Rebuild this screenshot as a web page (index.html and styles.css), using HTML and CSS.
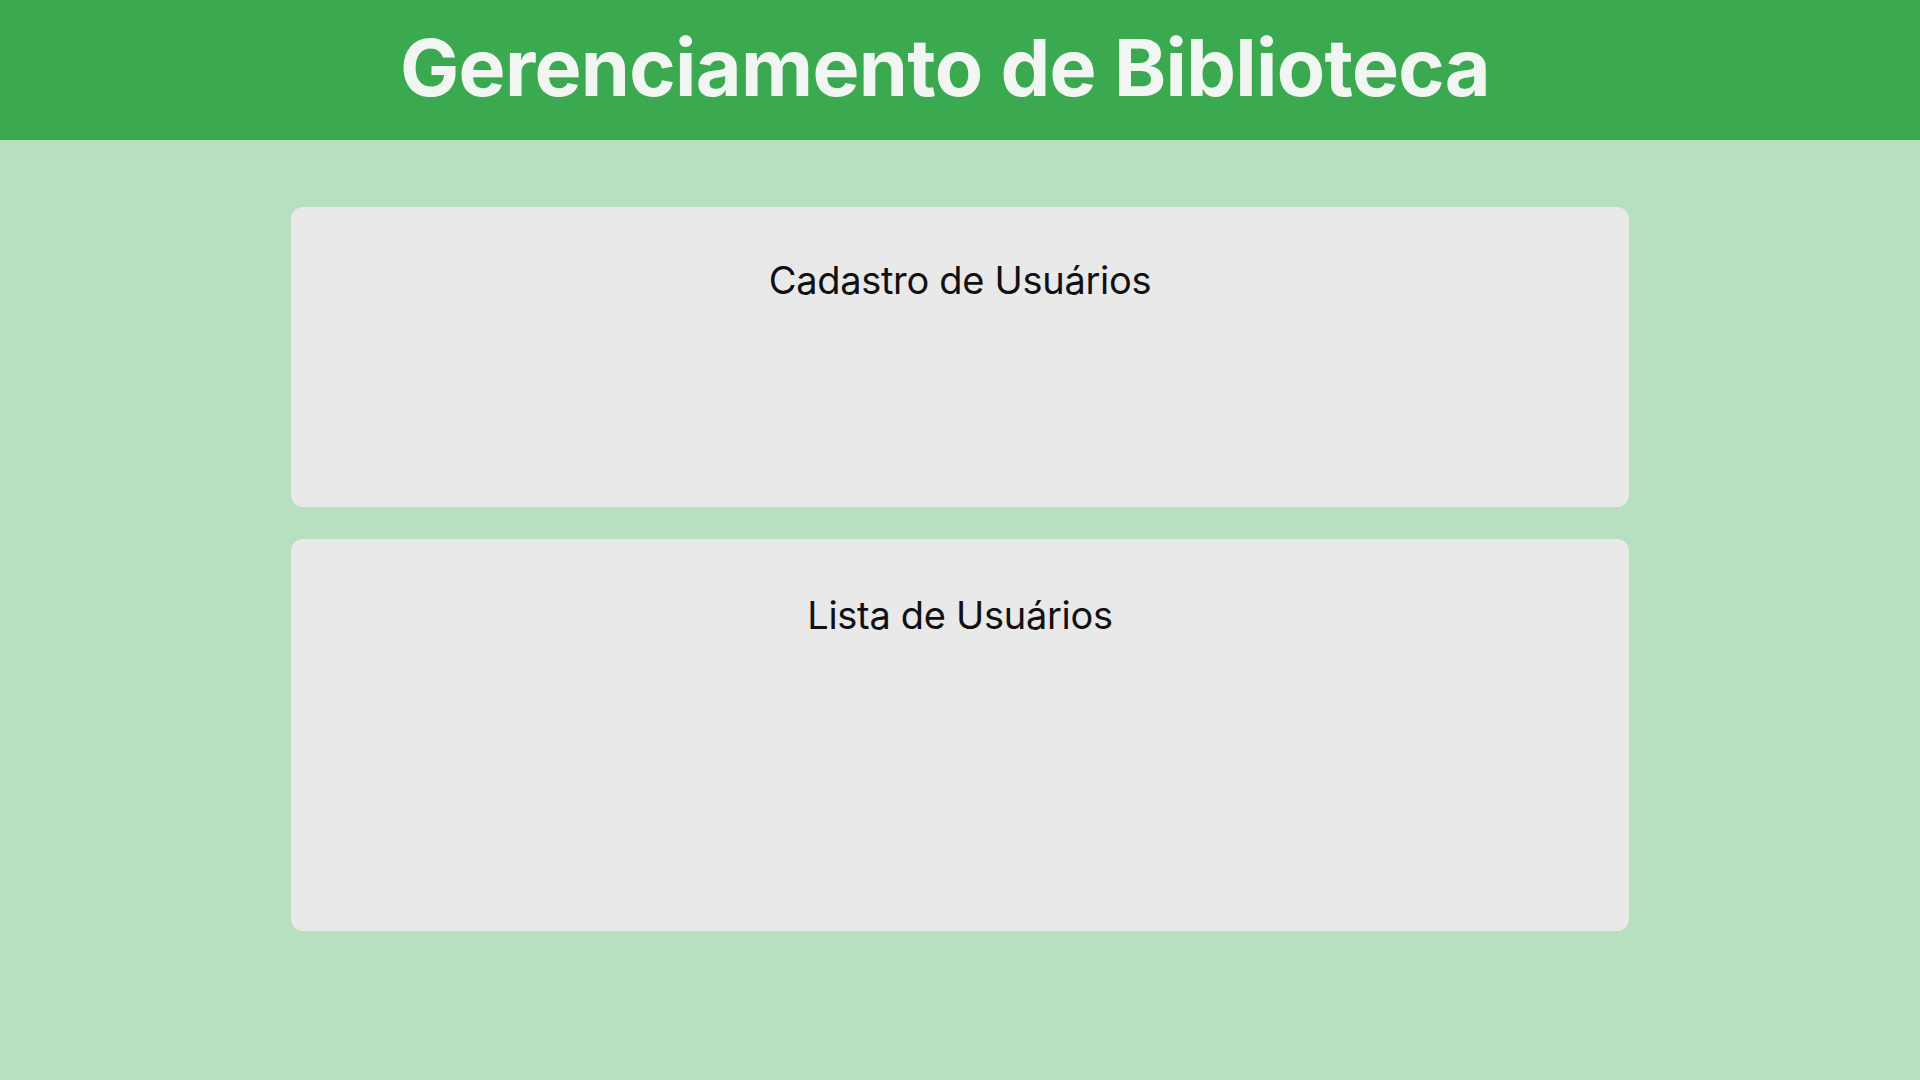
FILE: index.html
```html
<!DOCTYPE html>
<html lang="pt-BR">
<head>
<meta charset="utf-8">
<title>Gerenciamento de Biblioteca</title>
<link rel="stylesheet" href="styles.css">
</head>
<body>
<header class="topbar">
  <h1 class="topbar-title">Gerenciamento de Biblioteca</h1>
</header>
<main class="content">
  <section class="card card-cadastro">
    <h2 class="card-title">Cadastro de Usuários</h2>
  </section>
  <section class="card card-lista">
    <h2 class="card-title">Lista de Usuários</h2>
  </section>
</main>
</body>
</html>
```
FILE: styles.css
```css
html, body {
  margin: 0;
  padding: 0;
}
body {
  background: #b8dfc0;
  font-family: Inter, "Noto Sans", sans-serif;
  min-height: 1080px;
}
.topbar {
  height: 140px;
  background: #3ba950;
  display: flex;
  justify-content: center;
  align-items: flex-start;
  padding-right: 30px;
  box-sizing: border-box;
}
.topbar-title {
  margin: 0;
  padding-top: 19px;
  font-size: 79px;
  line-height: 96px;
  font-weight: 700;
  color: #f2f6f2;
  letter-spacing: -0.7px;
}
.content {
  display: flex;
  flex-direction: column;
  align-items: center;
  gap: 32px;
  padding-top: 67px;
}
.card {
  width: 1338px;
  background: #e9e9e9;
  border-radius: 12px;
  box-sizing: border-box;
  display: flex;
  flex-direction: column;
  align-items: center;
}
.card-cadastro {
  height: 300px;
  padding-top: 50px;
}
.card-lista {
  height: 392px;
  padding-top: 53px;
}
.card-title {
  margin: 0;
  font-size: 38px;
  line-height: 46px;
  font-weight: 400;
  color: #111;
  letter-spacing: -0.3px;
}
```
